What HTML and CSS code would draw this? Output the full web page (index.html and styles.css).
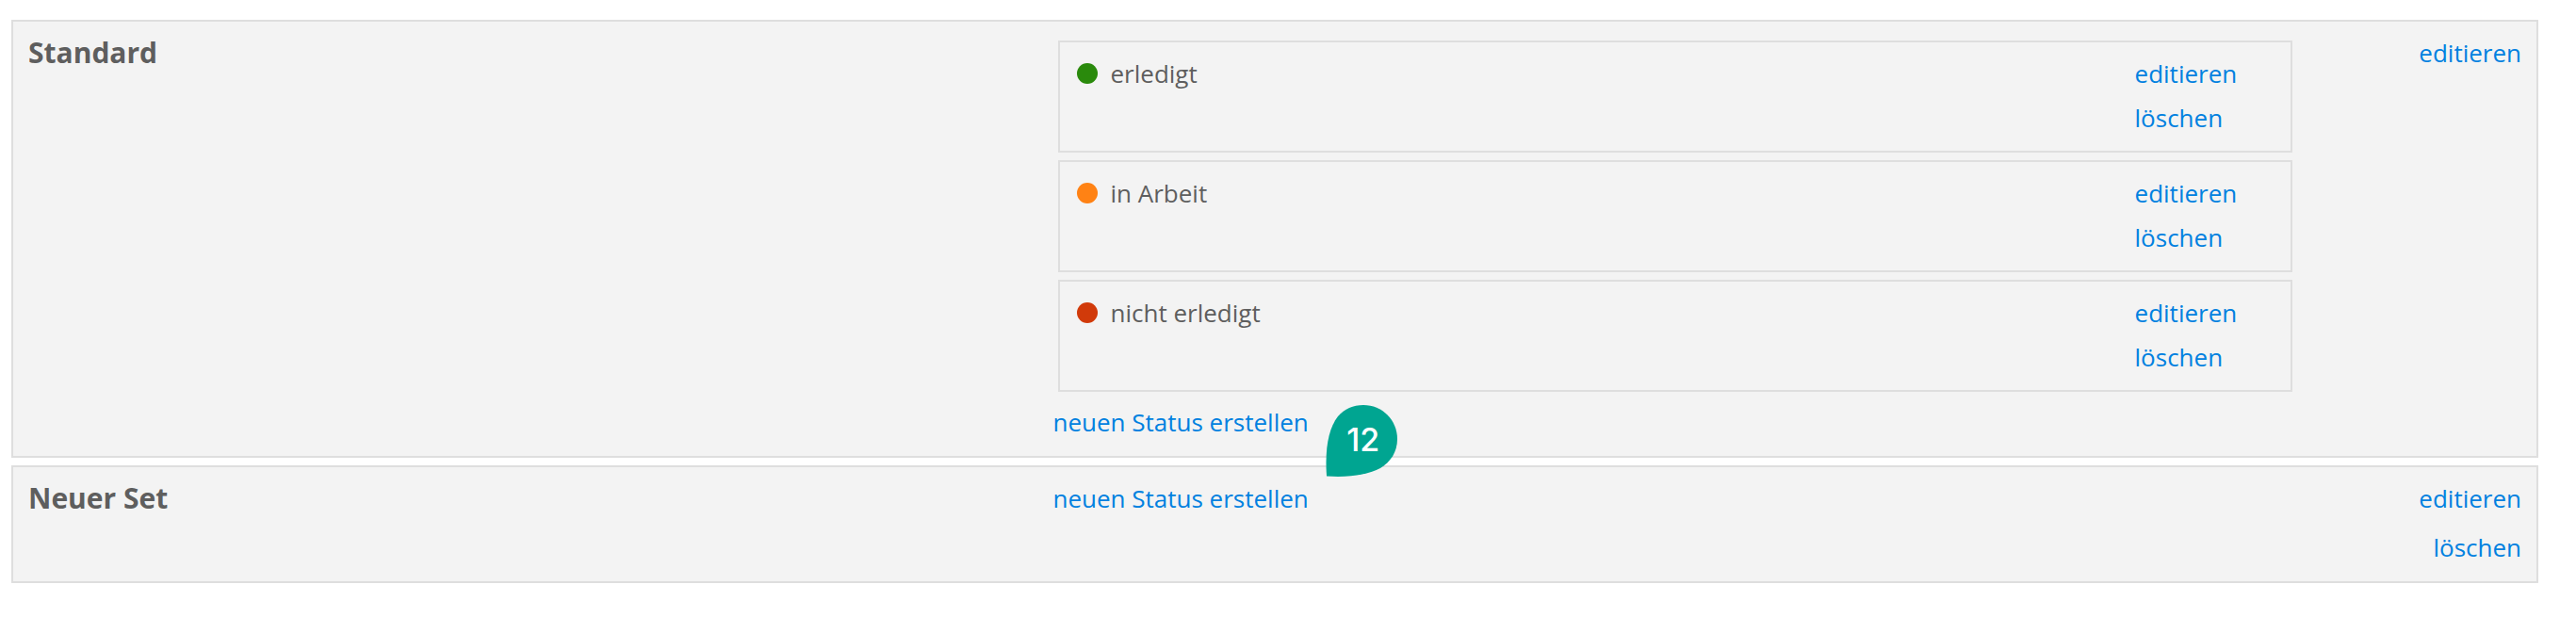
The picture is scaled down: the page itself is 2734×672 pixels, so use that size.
FILE: index.html
```html
<!DOCTYPE html>
<html lang="de">
<head>
  <meta charset="UTF-8">
  <meta name="viewport" content="width=device-width, initial-scale=1">
  <title>Status-Sets</title>
  <link rel="stylesheet" href="styles.css">
</head>
<body>
  <main class="sets">
    <section class="set">
      <h2 class="set-name">Standard</h2>
      <div class="set-content">
        <ul class="status-list">
          <li class="status">
            <span class="dot dot-done"></span>
            <span class="status-name">erledigt</span>
            <div class="status-actions">
              <a href="#">editieren</a>
              <a href="#">löschen</a>
            </div>
          </li>
          <li class="status">
            <span class="dot dot-progress"></span>
            <span class="status-name">in Arbeit</span>
            <div class="status-actions">
              <a href="#">editieren</a>
              <a href="#">löschen</a>
            </div>
          </li>
          <li class="status">
            <span class="dot dot-open"></span>
            <span class="status-name">nicht erledigt</span>
            <div class="status-actions">
              <a href="#">editieren</a>
              <a href="#">löschen</a>
            </div>
          </li>
        </ul>
        <div class="new-status">
          <a href="#">neuen Status erstellen</a>
          <!-- Step marker -->
          <span class="marker">
            <svg viewBox="0 0 76 76" aria-hidden="true">
              <path d="M1 75.500C-1 46 3 25 13 12C20 4 29 0 40 0C60 0 76 16 76 36C76 50 69 60 58 67C45 74 26 77 1 75.500Z" fill="#00a591"/>
            </svg>
            <span class="marker-number">12</span>
          </span>
        </div>
      </div>
      <div class="set-actions">
        <a href="#">editieren</a>
      </div>
    </section>

    <section class="set">
      <h2 class="set-name">Neuer Set</h2>
      <div class="set-content">
        <div class="new-status">
          <a href="#">neuen Status erstellen</a>
        </div>
      </div>
      <div class="set-actions">
        <a href="#">editieren</a>
        <a href="#">löschen</a>
      </div>
    </section>
  </main>
</body>
</html>
```

FILE: styles.css
```css
* {
  box-sizing: border-box;
}

body {
  margin: 0;
  padding: 21px 40px 21px 12px;
  font-family: "Open Sans", "Noto Sans", sans-serif;
  font-size: 26px;
  line-height: 36px;
  color: #5e5e5e;
  background: #fff;
}

a {
  color: #0081e0;
  text-decoration: none;
}

a:hover {
  text-decoration: underline;
}

.sets {
  display: flex;
  flex-direction: column;
  gap: 8px;
}

.set {
  display: grid;
  grid-template-columns: 41.1% 49.7% 1fr;
  padding: 15px 16px 18px;
  background: #f3f3f3;
  border: 2px solid #dedede;
}

.set-name {
  margin: 0;
  font-size: 30px;
  font-weight: 700;
  line-height: 36px;
}

/* Status list */
.status-list {
  display: flex;
  flex-direction: column;
  gap: 8px;
  margin: 5px 0 14px 5px;
  padding: 0;
  list-style: none;
}

.status {
  display: flex;
  align-items: flex-start;
  padding: 15px 18px 17px;
  border: 2px solid #dedede;
}

.dot {
  width: 22px;
  height: 22px;
  margin: 7px 14px 0 0;
  border-radius: 50%;
}

.dot-done {
  background: #2a8a0c;
}

.dot-progress {
  background: #ff8214;
}

.dot-open {
  background: #d13a0a;
}

.status-name {
  flex: 1;
}

.status-actions {
  display: flex;
  flex-direction: column;
  align-items: flex-start;
  gap: 11px;
  width: 147px;
}

.set-actions {
  display: flex;
  flex-direction: column;
  align-items: flex-end;
  gap: 16px;
}

.new-status {
  position: relative;
  width: fit-content;
}

/* Step marker over the set border */
.marker {
  position: absolute;
  top: 0;
  left: 100%;
  width: 76px;
  height: 76px;
  margin-left: 18px;
}

.marker svg {
  display: block;
}

.marker-number {
  position: absolute;
  inset: 0;
  padding-left: 4px;
  font-family: Inter, sans-serif;
  font-size: 34px;
  font-weight: 500;
  line-height: 74px;
  text-align: center;
  color: #fff;
}
```
